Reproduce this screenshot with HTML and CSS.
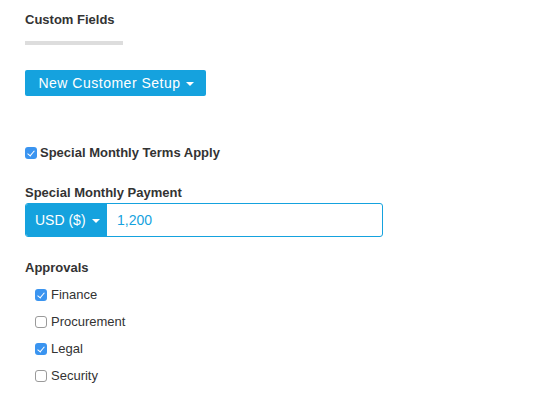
FILE: index.html
```html
<!DOCTYPE html>
<html>
<head>
<meta charset="utf-8">
<link rel="stylesheet" href="styles.css">
</head>
<body>
<div class="page">
  <h2 class="title">Custom Fields</h2>
  <div class="rule"></div>
  <button class="btn-primary">New Customer Setup <span class="caret"></span></button>

  <label class="check-main"><span class="cb checked"></span>Special Monthly Terms Apply</label>

  <div class="field-label">Special Monthly Payment</div>
  <div class="input-group">
    <button class="addon">USD ($) <span class="caret"></span></button>
    <div class="input">1,200</div>
  </div>

  <div class="field-label approvals">Approvals</div>
  <div class="checks">
    <label class="check"><span class="cb checked"></span>Finance</label>
    <label class="check"><span class="cb"></span>Procurement</label>
    <label class="check"><span class="cb checked"></span>Legal</label>
    <label class="check"><span class="cb"></span>Security</label>
  </div>
</div>
</body>
</html>
```

FILE: styles.css
```css
html, body {
  margin: 0;
  padding: 0;
  background: #fff;
}
body {
  font-family: "Liberation Sans", Arial, sans-serif;
  color: #333;
}
.page {
  padding: 11px 0 0 25px;
  display: flex;
  flex-direction: column;
  align-items: flex-start;
}
.title {
  margin: 0;
  font-size: 13px;
  line-height: 18px;
  font-weight: bold;
  color: #333;
}
.rule {
  margin-top: 12px;
  width: 98px;
  height: 4px;
  background: #dddddd;
}
.btn-primary {
  margin-top: 25px;
  width: 181px;
  height: 26px;
  border: 0;
  border-radius: 2px;
  background: #15a2de;
  color: #fff;
  font-family: "Liberation Sans", Arial, sans-serif;
  font-size: 14px;
  letter-spacing: 0.5px;
  padding: 0 0 0 1px;
  display: flex;
  align-items: center;
  justify-content: center;
  gap: 5px;
}
.caret {
  display: inline-block;
  width: 0;
  height: 0;
  border-left: 4px solid transparent;
  border-right: 4px solid transparent;
  border-top: 4px solid #fff;
  margin-top: 1px;
}
.check-main {
  margin-top: 49px;
  display: flex;
  align-items: center;
  gap: 3px;
  font-size: 13px;
  font-weight: bold;
  line-height: 16px;
}
.cb {
  box-sizing: border-box;
  width: 12px;
  height: 12px;
  border-radius: 3px;
  border: 1px solid #9a9a9a;
  background: #fff;
  position: relative;
  flex: none;
}
.cb.checked {
  border: 0;
  background: #3a94f0;
}
.cb.checked::after {
  content: "";
  position: absolute;
  left: 4px;
  top: 2px;
  width: 3px;
  height: 6px;
  border-right: 1.6px solid #fff;
  border-bottom: 1.6px solid #fff;
  transform: rotate(40deg);
}
.field-label {
  margin-top: 24px;
  font-size: 13px;
  font-weight: bold;
  line-height: 16px;
}
.input-group {
  margin-top: 2px;
  display: flex;
  width: 358px;
  height: 34px;
  box-sizing: border-box;
  border: 1px solid #15a2de;
  border-radius: 3px;
  overflow: hidden;
}
.addon {
  width: 81px;
  border: 0;
  background: #15a2de;
  color: #fff;
  font-family: "Liberation Sans", Arial, sans-serif;
  font-size: 14px;
  display: flex;
  align-items: center;
  gap: 6px;
  padding: 0 0 0 9px;
}
.input {
  flex: 1;
  display: flex;
  align-items: center;
  padding-left: 10px;
  font-size: 14px;
  color: #15a2de;
}
.approvals {
  margin-top: 23px;
}
.checks {
  margin-top: 11px;
  padding-left: 10px;
  display: flex;
  flex-direction: column;
  gap: 11px;
}
.check {
  display: flex;
  align-items: center;
  gap: 4px;
  font-size: 13px;
  line-height: 16px;
  color: #333;
}
```
